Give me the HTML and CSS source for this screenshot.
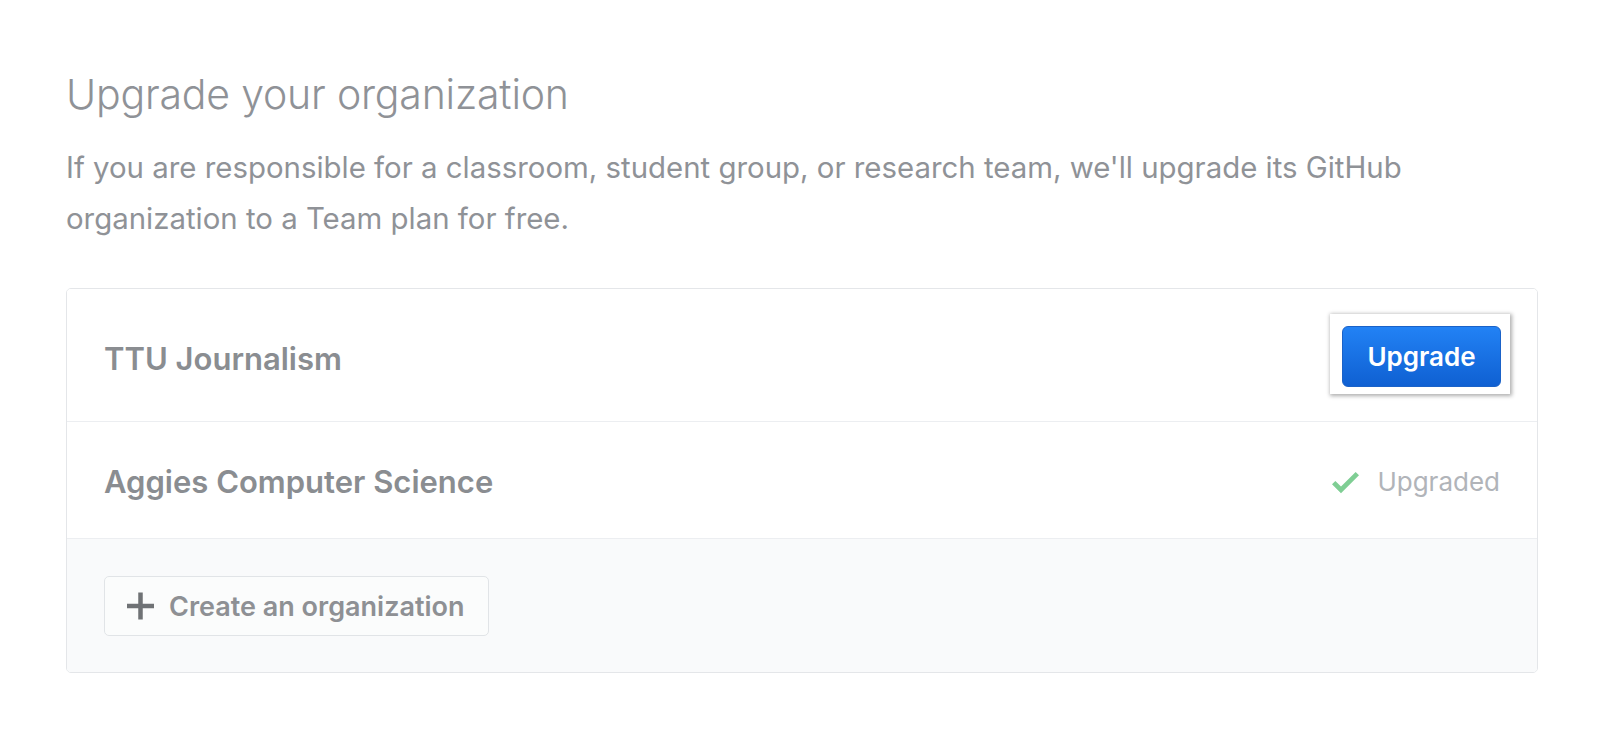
FILE: index.html
```html
<!DOCTYPE html>
<html lang="en">
<head>
<meta charset="utf-8">
<title>Upgrade your organization</title>
<link rel="stylesheet" href="styles.css">
</head>
<body>
<main class="page">
  <h1 class="title">Upgrade your organization</h1>
  <p class="lead">If you are responsible for a classroom, student group, or research team, we'll upgrade its GitHub organization to a Team plan for free.</p>
  <section class="card">
    <div class="row row-first">
      <span class="org-name org-name-first">TTU Journalism</span>
      <span class="highlight"><button class="btn-primary" type="button">Upgrade</button></span>
    </div>
    <div class="row">
      <span class="org-name">Aggies Computer Science</span>
      <span class="status">
        <svg class="check" viewBox="0 0 12 16" width="27" height="36" aria-hidden="true"><path d="M12 5l-8 8-4-4 1.5-1.5L4 10l6.5-6.5L12 5z"/></svg>
        <span class="status-text">Upgraded</span>
      </span>
    </div>
    <div class="card-footer">
      <button class="btn" type="button">
        <svg class="plus" viewBox="0 0 12 16" width="27" height="36" aria-hidden="true"><path d="M12 9H7v5H5V9H0V7h5V2h2v5h5v2z"/></svg>
        <span>Create an organization</span>
      </button>
    </div>
  </section>
</main>
</body>
</html>
```
FILE: styles.css
```css
* { box-sizing: border-box; }

html, body {
  margin: 0;
  padding: 0;
  background: #ffffff;
}

body {
  font-family: Inter, Roboto, "Liberation Sans", sans-serif;
  color: #8e9196;
}

.page {
  width: 1472px;
  margin-left: 66px;
  padding-top: 68px;
}

.title {
  margin: 0;
  font-size: 41px;
  line-height: 52px;
  font-weight: 300;
  color: #8f9297;
  letter-spacing: -0.2px;
}

.lead {
  max-width: 1400px;
  margin: 22px 0 0 0;
  font-size: 29.4px;
  line-height: 51px;
  font-weight: 400;
  color: #8f9297;
}

.card {
  margin-top: 44px;
  border: 1px solid #e4e6e9;
  border-radius: 5px;
  overflow: hidden;
}

.row {
  display: flex;
  align-items: center;
  justify-content: space-between;
  padding: 39px 37px 36px;
  border-bottom: 1px solid #eceef1;
  background: #fff;
}

.row-first {
  padding: 25px 27px 27px 37px;
}

.org-name {
  font-size: 31px;
  line-height: 41px;
  font-weight: 600;
  color: #8a8d91;
}

.org-name-first {
  margin-top: 8px;
}

.highlight {
  display: flex;
  padding: 12px 9px 7px 12px;
  background: #fff;
  box-shadow: 1px 1px 4px 1px rgba(0, 0, 0, 0.32);
}

.btn-primary {
  display: block;
  height: 61px;
  width: 159px;
  padding: 0;
  border: 1px solid #1a62c8;
  border-radius: 6px;
  background: linear-gradient(#2282f5, #0f60d2);
  color: #fff;
  font-family: inherit;
  font-size: 26px;
  font-weight: 600;
}

.status {
  display: flex;
  align-items: center;
  gap: 18px;
}

.check {
  display: block;
  fill: #7fce94;
}

.status-text {
  font-size: 26px;
  line-height: 41px;
  color: #b1b4b9;
}

.card-footer {
  padding: 37px 37px 36px;
  background: #f9fafb;
}

.btn {
  display: flex;
  align-items: center;
  gap: 15px;
  height: 60px;
  padding: 0 23px 0 22px;
  border: 1px solid #e1e4e7;
  border-radius: 5px;
  background: #fbfcfc;
  color: #8e9094;
  font-family: inherit;
  font-size: 27px;
  font-weight: 600;
}

.plus {
  display: block;
  fill: #6f7275;
}
```
